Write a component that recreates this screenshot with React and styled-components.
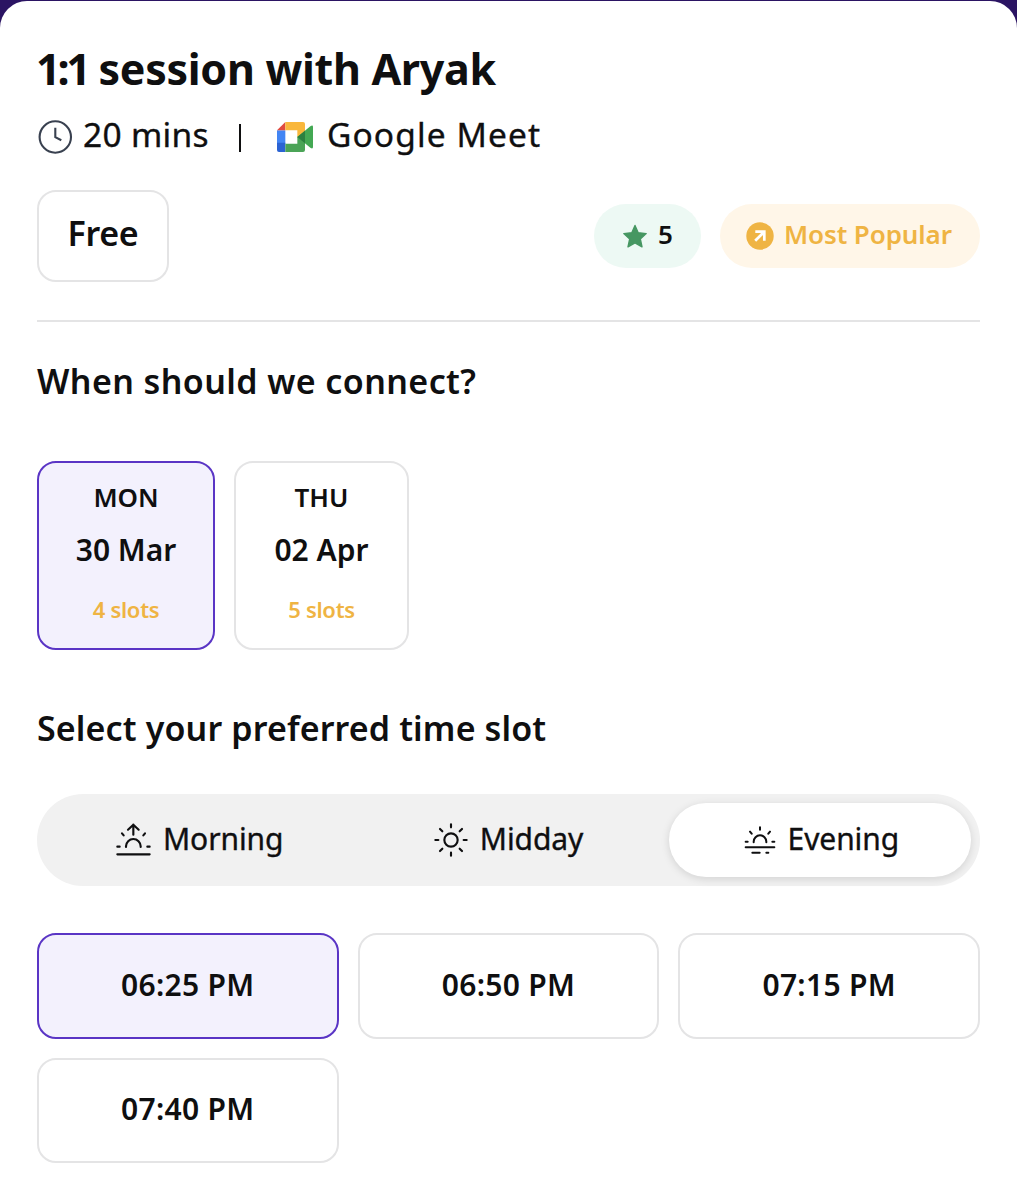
import React, { useState } from 'react';
import styled, { createGlobalStyle } from 'styled-components';

const colors = {
    ink: '#0f0f10',
    line: '#e4e4e5',
    purple: '#5a35c5',
    lilac: '#f3f1fd',
    amber: '#efb443',
    green: '#469762',
};

const GlobalStyle = createGlobalStyle`
    * {
        box-sizing: border-box;
    }
    body {
        margin: 0;
        background: #2b1463;
        font-family: 'Noto Sans', 'Open Sans', sans-serif;
        color: ${colors.ink};
    }
    button {
        font: inherit;
        color: inherit;
        margin: 0;
    }
`;

const Sheet = styled.main`
    width: 100%;
    height: 1199px;
    margin-top: 1px;
    padding: 37px 37px 0;
    background: #fff;
    border-radius: 27px 27px 0 0;
`;

const Title = styled.h1`
    margin: 0 0 0 -1px;
    font-size: 43px;
    line-height: 62px;
    height: 60px;
    font-weight: 700;
    letter-spacing: -0.3px;
    white-space: nowrap;
`;

const Ratio = styled.span`
    letter-spacing: -3.2px;
`;

// Duration and meeting place
const Meta = styled.div`
    display: flex;
    align-items: center;
    height: 40px;
    margin-top: 16px;
    font-size: 33.5px;
    line-height: 40px;
    white-space: nowrap;
    -webkit-text-stroke: 0.35px ${colors.ink};

    svg {
        flex: none;
        margin-top: 5px;
    }
`;

const Duration = styled.span`
    margin-left: 10px;
    width: 156px;
    letter-spacing: 0.3px;
`;

const Bar = styled.span`
    width: 2px;
    height: 28px;
    margin: 8px 36px 0 0;
    background: ${colors.ink};
`;

const Place = styled.span`
    margin-left: 14px;
    letter-spacing: 1.1px;
`;

const PriceRow = styled.div`
    display: flex;
    align-items: center;
    height: 92px;
    margin-top: 36px;
`;

const Price = styled.div`
    width: 132px;
    height: 92px;
    margin-right: auto;
    border: 2px solid ${colors.line};
    border-radius: 19px;
    font-size: 34px;
    line-height: 83px;
    font-weight: 600;
    letter-spacing: -0.3px;
    text-align: center;
`;

const Pill = styled.div`
    display: flex;
    align-items: center;
    height: 64px;
    width: ${({ $width }) => $width}px;
    margin-left: 19px;
    padding-left: ${({ $inset }) => $inset}px;
    border-radius: 32px;
    background: ${({ $background }) => $background};
    color: ${({ $color }) => $color};
    font-size: 26px;
    line-height: 36px;
    font-weight: 600;
    white-space: nowrap;

    span {
        margin: 0 0 4px 10px;
        letter-spacing: -0.1px;
    }
`;

const Divider = styled.hr`
    height: 2px;
    margin: 38px 0 39px;
    border: 0;
    background: ${colors.line};
`;

const Heading = styled.h2`
    margin: 0;
    font-size: 34px;
    line-height: 40px;
    font-weight: 600;
    letter-spacing: ${({ $spacing }) => $spacing}px;
    white-space: nowrap;
`;

const Days = styled.div`
    display: flex;
    gap: 19px;
    margin: 60px 0 58px;
`;

const Option = styled.button`
    border: 2px solid ${({ $active }) => ($active ? colors.purple : colors.line)};
    border-radius: 19px;
    background: ${({ $active }) => ($active ? colors.lilac : '#fff')};
    font-weight: 600;
    text-align: center;
    white-space: nowrap;
    cursor: pointer;
`;

const Day = styled(Option)`
    display: flex;
    flex-direction: column;
    align-items: center;
    width: ${({ $width }) => $width}px;
    height: 189px;
    padding: 16px 0 0;
`;

const Weekday = styled.span`
    font-size: 26px;
    line-height: 36px;
`;

const DateText = styled.span`
    margin-top: 15px;
    font-size: 30px;
    line-height: 40px;
`;

const SlotCount = styled.span`
    margin-top: 24px;
    color: ${colors.amber};
    font-size: 22px;
    line-height: 30px;
    letter-spacing: -0.3px;
`;

const Tabs = styled.div`
    display: grid;
    grid-template-columns: repeat(3, 1fr);
    gap: 9px;
    height: 92px;
    margin: 46px 0 47px;
    padding: 9px;
    border-radius: 46px;
    background: #f1f1f1;
`;

const Tab = styled.button`
    display: flex;
    align-items: center;
    justify-content: center;
    padding: 0 0 0 ${({ $inset }) => $inset}px;
    border: 0;
    border-radius: 37px;
    background: ${({ $active }) => ($active ? '#fff' : 'transparent')};
    box-shadow: ${({ $active }) => ($active ? '0 2px 9px rgba(0, 0, 0, 0.13)' : 'none')};
    font-size: 30px;
    line-height: 40px;
    letter-spacing: -0.1px;
    white-space: nowrap;
    cursor: pointer;
    -webkit-text-stroke: 0.35px ${colors.ink};

    span {
        margin: 0 0 3px 12px;
    }
`;

const Slots = styled.div`
    display: grid;
    grid-template-columns: repeat(3, 1fr);
    gap: 19px;
`;

const Slot = styled(Option)`
    height: 105.5px;
    padding: 0 0 3px;
    font-size: 30px;
    letter-spacing: 0.3px;
`;

const LineIcon = ({ width, height, viewBox, stroke = 6.4, color = colors.ink, children }) => (
    <svg
        width={width}
        height={height}
        viewBox={viewBox}
        fill="none"
        stroke={color}
        strokeWidth={stroke}
        strokeLinecap="round"
        strokeLinejoin="round"
    >
        {children}
    </svg>
);

const ClockIcon = () => (
    <LineIcon width="36" height="36" viewBox="0 0 36 36" stroke="2.1" color="#394150">
        <circle cx="18.3" cy="18" r="15.7" />
        <path d="M18.3 8.8v9.4l6 3" strokeLinecap="butt" strokeLinejoin="miter" />
    </LineIcon>
);

const MeetIcon = () => (
    <svg width="36" height="30" viewBox="0 0 108 90">
        <path d="M0 25h25v40H0z" fill="#4285f4" />
        <path d="M0 62h25v28H6q-6 0-6-6z" fill="#2b63d3" />
        <path d="M0 25 25 0v25z" fill="#e04a3f" />
        <path d="M25 0h53q6 0 6 6v39H61V25H25z" fill="#f9b73c" />
        <path d="M25 65h36V45h23v39q0 6-6 6H25z" fill="#4ba457" />
        <path d="M61 45 101 12q7-4 7 3v60q0 7-7 3z" fill="#43a853" />
        <path d="M61 45 84 26v38z" fill="#2c8040" />
    </svg>
);

const StarIcon = () => (
    <svg width="26" height="25" viewBox="0 0 26 25">
        <path
            d="M13 1.5l3.2 7.2 8 .9-5.9 5.3 1.7 7.9-7-4-7 4 1.7-7.9-5.9-5.3 8-.9z"
            fill={colors.green}
            stroke={colors.green}
            strokeWidth="1.4"
            strokeLinejoin="round"
        />
    </svg>
);

const PopularIcon = () => (
    <svg width="28" height="28" viewBox="0 0 28 28">
        <circle cx="14" cy="14" r="13.7" fill={colors.amber} />
        <path d="M9.3 9.7h9v9M18 10l-8.8 8.8" fill="none" stroke="#fff" strokeWidth="2.7" />
    </svg>
);

const SunriseIcon = () => (
    <LineIcon width="35" height="34" viewBox="0 0 105 102">
        <path d="M4 94h97M52 35V5M36 20 52 5l16 15" />
        <path d="M30 72v-2a22 22 0 0 1 44 0v2" />
        <path d="M4 71h7M94 71h7M18 31l5 6M87 31l-5 6" />
    </LineIcon>
);

const SunIcon = () => (
    <LineIcon width="34" height="34" viewBox="0 0 102 102">
        <circle cx="51" cy="51" r="20" />
        <path d="M51 4v9M51 89v9M4 51h9M89 51h9" />
        <path d="M18 18l7 7M84 18l-7 7M18 84l7-7M84 84l-7-7" />
    </LineIcon>
);

const SunsetIcon = () => (
    <LineIcon width="32" height="28" viewBox="0 0 96 84" stroke="6">
        <path d="M5 64h86M25 80h22M67 80h6" />
        <path d="M29 49v-2a19 19 0 0 1 38 0v2" />
        <path d="M5 47h6M85 47h6M18 17l5 6M78 17l-5 6M48 4v7" />
    </LineIcon>
);

const days = [
    { weekday: 'MON', date: '30 Mar', slots: 4, width: 178 },
    { weekday: 'THU', date: '02 Apr', slots: 5, width: 175 },
];

const periods = [
    { name: 'Morning', icon: <SunriseIcon />, inset: 5 },
    { name: 'Midday', icon: <SunIcon />, inset: 0 },
    { name: 'Evening', icon: <SunsetIcon />, inset: 3 },
];

const times = ['06:25 PM', '06:50 PM', '07:15 PM', '07:40 PM'];

const App = () => {
    const [day, setDay] = useState('MON');
    const [period, setPeriod] = useState('Evening');
    const [time, setTime] = useState('06:25 PM');

    return (
        <>
            <GlobalStyle />
            <Sheet>
                <Title>
                    <Ratio>1:1</Ratio> session with Aryak
                </Title>
                <Meta>
                    <ClockIcon />
                    <Duration>20 mins</Duration>
                    <Bar />
                    <MeetIcon />
                    <Place>Google Meet</Place>
                </Meta>
                <PriceRow>
                    <Price>Free</Price>
                    <Pill $width={107} $inset={28} $background="#edf9f4" $color={colors.ink}>
                        <StarIcon />
                        <span>5</span>
                    </Pill>
                    <Pill $width={260} $inset={26} $background="#fff6e8" $color={colors.amber}>
                        <PopularIcon />
                        <span>Most Popular</span>
                    </Pill>
                </PriceRow>
                <Divider />
                <Heading $spacing={0.4}>When should we connect?</Heading>
                <Days>
                    {days.map(({ weekday, date, slots, width }) => (
                        <Day
                            key={weekday}
                            $width={width}
                            $active={weekday === day}
                            onClick={() => setDay(weekday)}
                        >
                            <Weekday>{weekday}</Weekday>
                            <DateText>{date}</DateText>
                            <SlotCount>{slots} slots</SlotCount>
                        </Day>
                    ))}
                </Days>
                <Heading $spacing={0.13}>Select your preferred time slot</Heading>
                <Tabs>
                    {periods.map(({ name, icon, inset }) => (
                        <Tab
                            key={name}
                            $inset={inset}
                            $active={name === period}
                            onClick={() => setPeriod(name)}
                        >
                            {icon}
                            <span>{name}</span>
                        </Tab>
                    ))}
                </Tabs>
                <Slots>
                    {times.map(t => (
                        <Slot key={t} $active={t === time} onClick={() => setTime(t)}>
                            {t}
                        </Slot>
                    ))}
                </Slots>
            </Sheet>
        </>
    );
};

export default App;
